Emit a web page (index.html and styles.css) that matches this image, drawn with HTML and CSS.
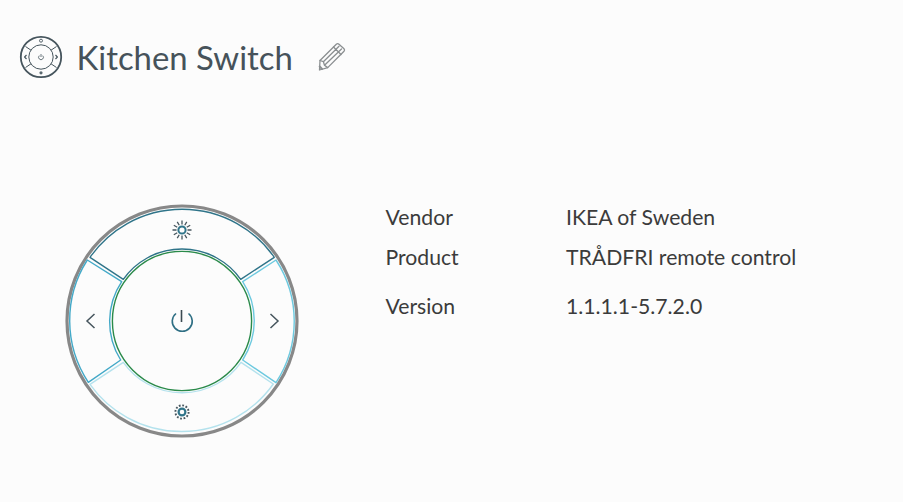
FILE: index.html
```html
<!DOCTYPE html>
<html lang="en">
<head>
<meta charset="utf-8">
<title>Kitchen Switch</title>
<link rel="stylesheet" href="styles.css">
</head>
<body>
<header class="header">
  <svg class="device-icon" viewBox="19 35 44 44" width="44" height="44" aria-hidden="true">
    <g fill="none" stroke="#46555d">
      <circle cx="41" cy="57" r="20.2" stroke-width="1.8"/>
      <circle cx="41" cy="57" r="12.2" stroke-width="1"/>
      <path d="M25.5 46.5L31 50.2M56.5 46.5L51 50.2M25.5 67.5L31 63.8M56.5 67.5L51 63.8" stroke-width="1"/>
      <circle cx="41" cy="40.7" r="1.5" stroke-width="0.9"/>
      <path d="M26.5 55L24.6 57L26.5 59M55.5 55L57.4 57L55.5 59" stroke-width="1.2"/>
      <path d="M42.7 55.6A2.4 2.4 0 1 1 39.3 55.6M41 54V57" stroke-width="0.8"/>
    </g>
    <circle cx="41" cy="72.8" r="1.6" fill="#5a686f"/>
  </svg>
  <h1 class="title">Kitchen Switch</h1>
  <svg class="edit-icon" viewBox="318 42 28 29" width="28" height="29" aria-hidden="true">
    <g fill="none" stroke="#8b8f91" stroke-width="1.3" stroke-linejoin="round" stroke-linecap="round">
      <path d="M320 60.5L336.3 44.2Q337.6 43 339 44.2L344 48.8Q345.1 50 344 51.2L327.7 67.6L319.5 70Z"/>
      <path d="M320 60.5L323.4 61.7L324.5 65.3L327.7 67.6M323.4 61.7L339 46.2M324.5 65.3L341.5 49M333.5 47L341 54.5"/>
      <path d="M319.7 66.5L322 69" stroke-width="2"/>
    </g>
  </svg>
</header>
<main class="content">
  <svg class="remote" viewBox="62 201 240 240" width="240" height="240" aria-hidden="true">
    <circle cx="182" cy="321" r="115" fill="none" stroke="#888888" stroke-width="3.2"/>
    <g fill="none" stroke-width="1.4" stroke-linejoin="round">
      <path stroke="#2f7489" d="M90 257.3A112.3 112.3 0 0 1 274.3 257.3L240.7 279.3A72 72 0 0 0 123.3 279.3Z"/>
      <path stroke="#43a9c8" d="M87.3 260L121.7 281.7A72 72 0 0 0 120.7 360L88.3 382.3A112.3 112.3 0 0 1 87.3 260Z"/>
      <path stroke="#6cc9df" d="M276 260L242.7 281.7A72 72 0 0 1 242.7 360L276 382.7A112.3 112.3 0 0 0 276 260Z"/>
      <path stroke="#b4e2ed" d="M90 384.3L123.3 362.3A72 72 0 0 0 241 362.3L273.3 384A112.3 112.3 0 0 1 90 384.3Z"/>
      <circle cx="182" cy="321" r="69.6" stroke="#2a8a4a"/>
    </g>
    <g fill="none" stroke="#46555d" stroke-width="1.5">
      <path d="M94.5 314L87 321L94.5 328M270.5 314L278 321L270.5 328"/>
    </g>
    <path d="M176 313.5A10 10 0 1 0 188.5 313.5" fill="none" stroke="#2f6f84" stroke-width="1.6"/>
    <path d="M181.5 310V322" stroke="#3b4a52" stroke-width="1.6"/>
    <circle cx="182" cy="230" r="3.6" fill="none" stroke="#2f7489" stroke-width="2"/>
    <path d="M182 220.5V224.5M182 235.500V239.500M172.500 230H176.500M187.500 230H191.500M177.250 221.800L179.250 225.240M184.750 234.760L186.750 238.200M177.250 238.200L179.250 234.760M184.750 225.240L186.750 221.800M173.800 225.250L177.240 227.250M186.760 232.750L190.200 234.750M173.800 234.750L177.240 232.750M186.760 227.250L190.200 225.250" stroke="#46555d" stroke-width="1.3"/>
    <circle cx="182" cy="412" r="3.4" fill="none" stroke="#2f7489" stroke-width="2.2"/>
    <circle cx="182" cy="412" r="6.6" fill="none" stroke="#46555d" stroke-width="1.9" stroke-dasharray="1.8 1.66"/>
  </svg>
  <div class="info">
    <div class="row"><span class="label">Vendor</span><span>IKEA of Sweden</span></div>
    <div class="row"><span class="label">Product</span><span>TRÅDFRI remote control</span></div>
    <div class="row row-gap"><span class="label">Version</span><span>1.1.1.1-5.7.2.0</span></div>
  </div>
</main>
</body>
</html>
```
FILE: styles.css
```css
html, body {
  margin: 0;
  height: 100%;
  overflow: hidden;
  background: #fcfcfc;
}
body {
  font-family: Lato, "Open Sans", sans-serif;
  color: #3b3b3b;
}
.header {
  display: flex;
  align-items: center;
  padding: 35px 0 0 19px;
  height: 44px;
}
.device-icon {
  flex: none;
}
.title {
  margin: 1px 26px 0 13.5px;
  font-size: 32.9px;
  font-weight: 400;
  line-height: 44px;
  color: #46525a;
}
.edit-icon {
  flex: none;
  margin-top: -1px;
  margin-left: -1px;
}
.content {
  display: flex;
  align-items: flex-start;
  padding: 122px 0 0 62px;
}
.remote {
  flex: none;
}
.info {
  margin: 0 0 0 83.5px;
  font-size: 21.2px;
  line-height: 32px;
}
.row {
  display: flex;
  margin-bottom: 7px;
}
.row:first-child {
  margin-bottom: 8px;
}
.row-gap {
  margin-top: 17px;
}
.label {
  width: 180.5px;
}
```
